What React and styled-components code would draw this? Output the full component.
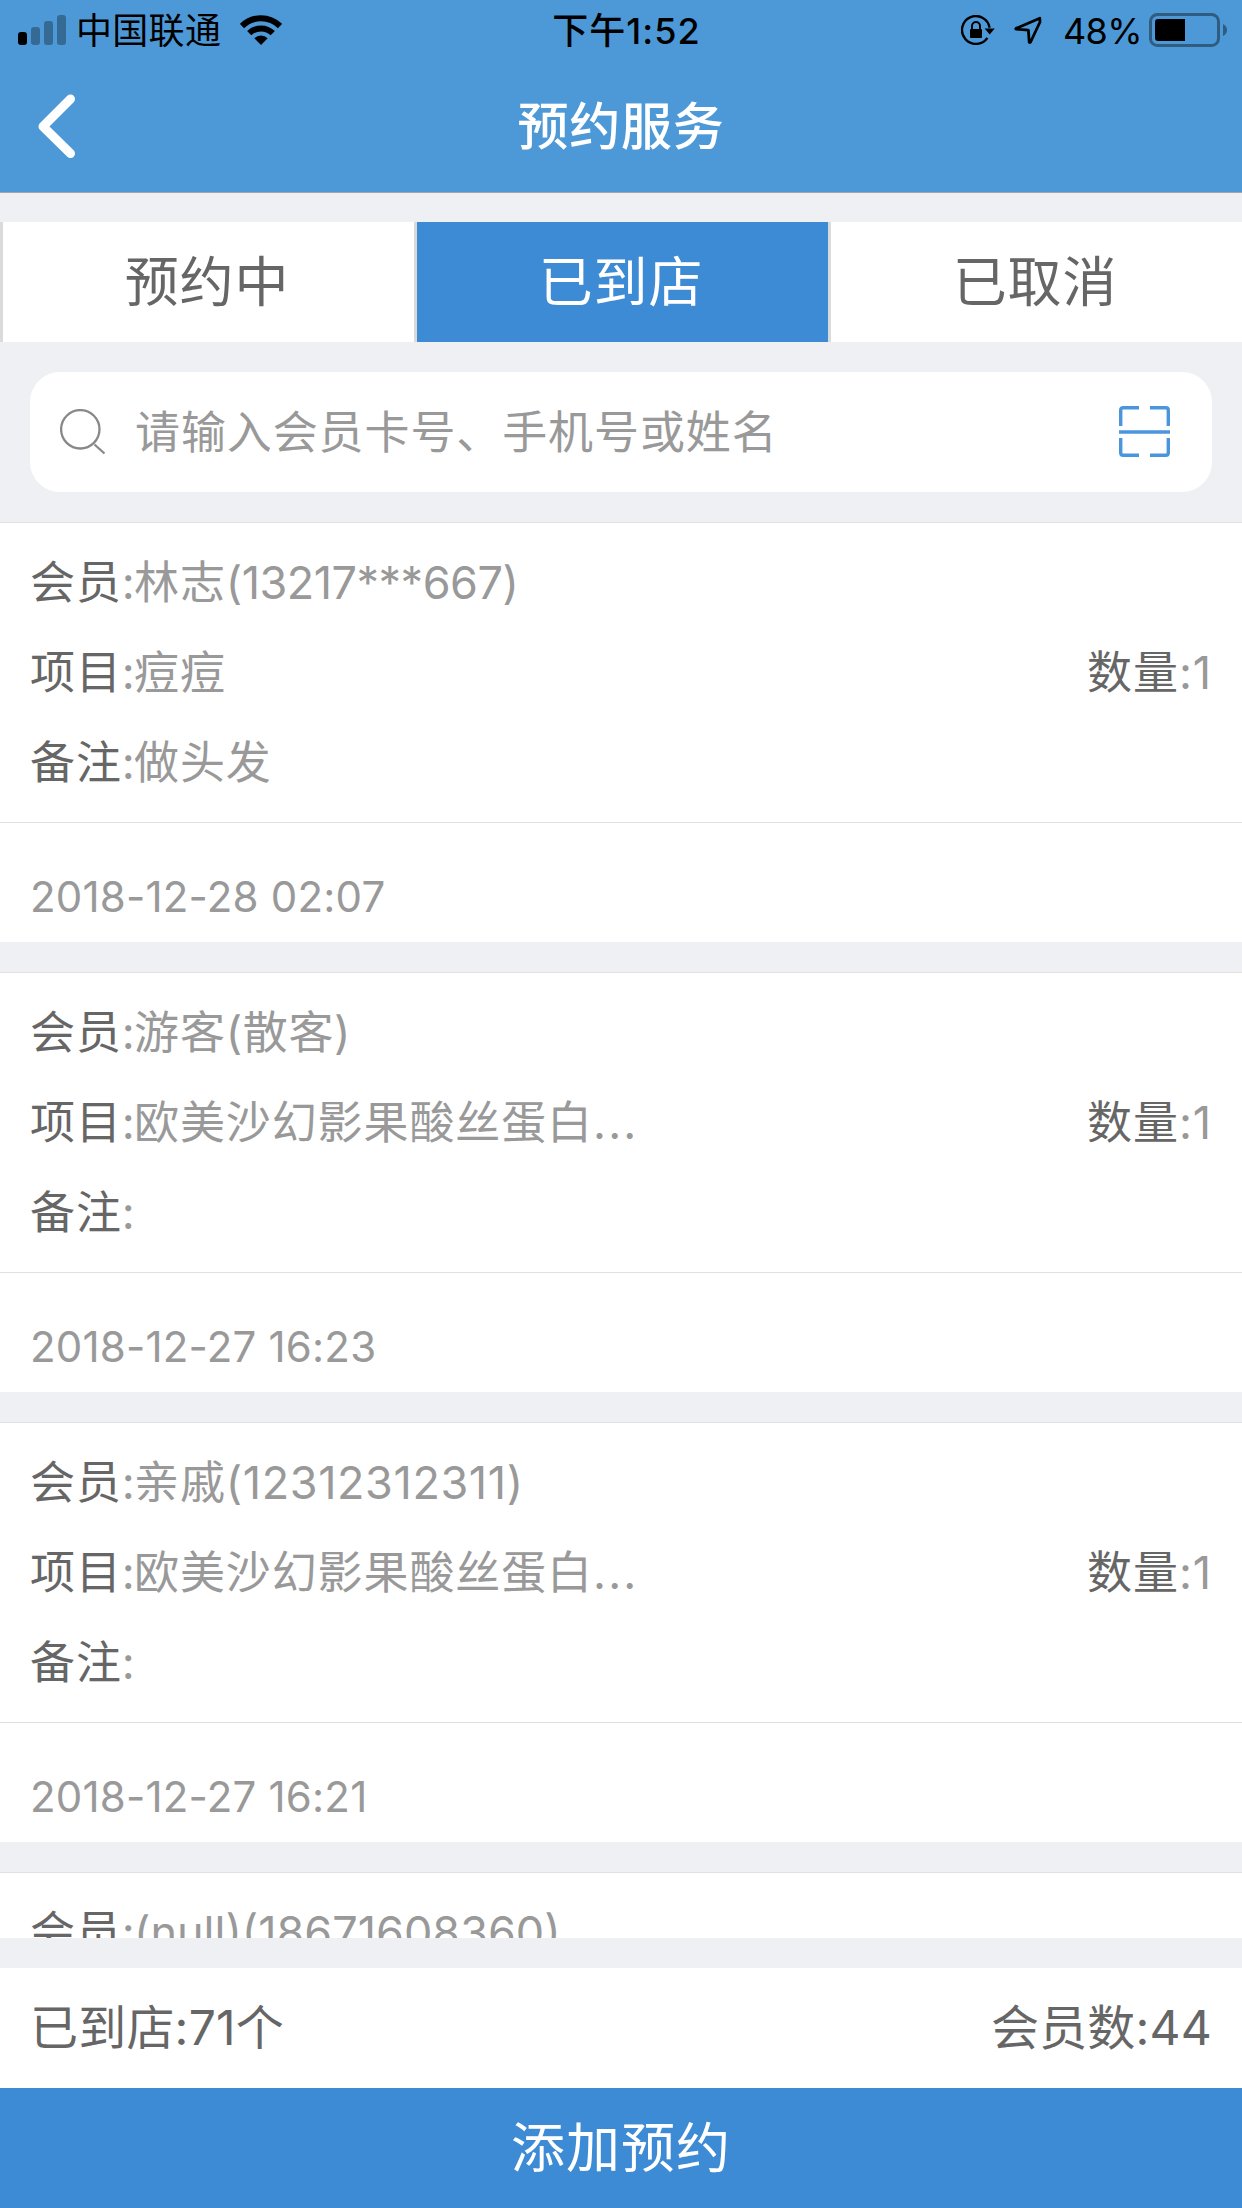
import React, { useState } from 'react';
import styled, { createGlobalStyle } from 'styled-components';

const GlobalStyle = createGlobalStyle`
  * {
    box-sizing: border-box;
  }

  body {
    margin: 0;
    background: #eff0f4;
    font-family: Inter, 'Noto Sans CJK SC', sans-serif;
    -webkit-font-smoothing: antialiased;
  }

  button, input {
    font-family: inherit;
    border: none;
    padding: 0;
    background: none;
  }
`;

const Screen = styled.div`
  width: 1242px;
  height: 2208px;
  display: flex;
  flex-direction: column;
  overflow: hidden;
  background: #eff0f4;
`;

const Header = styled.header`
  flex: none;
  background: #4d99d7;
  border-bottom: 1px solid #a4a6ad;
`;

const StatusBar = styled.div`
  height: 60px;
  display: grid;
  grid-template-columns: 1fr auto 1fr;
  align-items: center;
  padding: 0 15px 0 18px;
  font-size: 36px;
  line-height: 60px;
  color: #000;
`;

const StatusGroup = styled.div`
  display: flex;
  align-items: center;
  justify-content: ${(props) => props.$end ? 'flex-end' : 'flex-start'};

  svg {
    display: block;
    flex: none;
  }
`;

const Carrier = styled.span`
  margin: 0 19px 0 10px;
  padding-top: 2px;
  line-height: 58px;
  letter-spacing: 0.3px;
`;

const Clock = styled.span`
  padding: 2px 0 0 8px;
  line-height: 58px;
  font-weight: 500;
  letter-spacing: 1px;
`;

const BatteryLevel = styled.span`
  margin: 0 7px 0 21px;
  padding-top: 2px;
  line-height: 58px;
  letter-spacing: -0.6px;
`;

const NavBar = styled.div`
  height: 132px;
  display: grid;
  grid-template-columns: 120px 1fr 120px;
  align-items: center;
`;

const BackButton = styled.button`
  height: 132px;
  padding-left: 36px;
  display: flex;
  align-items: center;
  cursor: pointer;
`;

const Title = styled.h1`
  margin: 0;
  padding-top: 2px;
  text-align: center;
  font-size: 51px;
  font-weight: 500;
  line-height: 130px;
  letter-spacing: 0.7px;
  color: #fff;
`;

const Tabs = styled.div`
  flex: none;
  display: flex;
  height: 120px;
  margin-top: 29px;
`;

const Tab = styled.button`
  flex: 1;
  padding-top: 2px;
  font-size: 54px;
  line-height: 118px;
  letter-spacing: 0.8px;
  color: ${(props) => props.$active ? '#fff' : '#666'};
  background: ${(props) => props.$active ? '#3d8bd4' : '#fff'};
  box-shadow: inset 3px 0 0 #dadada;
  cursor: pointer;
`;

const SearchBox = styled.div`
  flex: none;
  height: 120px;
  margin: 30px;
  padding: 0 42px 0 30px;
  display: flex;
  align-items: center;
  background: #fff;
  border-radius: 30px;
`;

const SearchInput = styled.input`
  flex: 1;
  height: 120px;
  margin-left: 30px;
  padding-top: 1px;
  font-size: 45px;
  letter-spacing: 0.9px;
  color: #666;
  outline: none;

  &::placeholder {
    color: #999;
    opacity: 1;
  }
`;

const List = styled.div`
  flex: 1;
  min-height: 0;
  overflow: hidden;
  display: flex;
  flex-direction: column;
  gap: 30px;
`;

const Card = styled.article`
  flex: none;
  background: #fff;
  border-top: 1px solid #e0e0e2;
`;

const CardBody = styled.div`
  padding: 15px 30px 14px;
`;

const Row = styled.div`
  display: flex;
  justify-content: space-between;
  height: 90px;
  line-height: 90px;
  font-size: 45px;
`;

const Field = styled.div`
  letter-spacing: 0.9px;
  white-space: nowrap;
  color: #999;
`;

const Label = styled.span`
  color: #666;
`;

const Latin = styled.span`
  letter-spacing: ${(props) => props.$tracking || 0}px;
`;

const CardFooter = styled.div`
  height: 120px;
  padding: 29px 30px 0;
  border-top: 1px solid #e0e0e2;
  font-size: 42px;
  line-height: 90px;
  letter-spacing: 0.2px;
  color: #999;
`;

const Summary = styled.div`
  flex: none;
  height: 120px;
  margin-top: 30px;
  padding: 0 30px;
  display: flex;
  justify-content: space-between;
  background: #fff;
  font-size: 48px;
  line-height: 120px;
  letter-spacing: 0.2px;
  color: #666;
`;

const AddButton = styled.button`
  flex: none;
  height: 120px;
  padding-top: 2px;
  background: #3d8bd4;
  color: #fff;
  font-size: 54px;
  line-height: 118px;
  letter-spacing: 1px;
  cursor: pointer;
`;

const LockSlot = styled.span`
  margin-right: 19px;
`;

const SignalIcon = () => (
  <svg width="48" height="30" viewBox="0 0 48 30">
    <rect x="0" y="17" width="9" height="13" rx="3" />
    <g opacity="0.3">
      <rect x="13" y="12" width="9" height="18" rx="3" />
      <rect x="26" y="6" width="9" height="24" rx="3" />
      <rect x="39" y="0" width="9" height="30" rx="3" />
    </g>
  </svg>
);

const WifiIcon = () => (
  <svg width="42" height="30" viewBox="0 0 42 30">
    <g fill="none" stroke="#000" strokeWidth="6">
      <path d="M2 11 A27 27 0 0 1 40 11" />
      <path d="M9.2 18.2 A17 17 0 0 1 32.8 18.2" />
    </g>
    <path d="M21 30 L14.3 23.3 A9.6 9.6 0 0 1 27.7 23.3 Z" />
  </svg>
);

const RotationLockIcon = () => (
  <svg width="34" height="30" viewBox="0 0 34 30">
    <path d="M26.4 22.8 A13.9 13.9 0 1 1 28.6 12.8" fill="none" stroke="#000" strokeWidth="2.4" />
    <path d="M23.6 13.6 H33.8 L28.7 19.6 Z" />
    <rect x="9" y="14" width="12" height="9" rx="1" />
    <path d="M11 14.5 V11 A4 4 0 0 1 19 11 V14.5" fill="none" stroke="#000" strokeWidth="2" />
  </svg>
);

const LocationIcon = () => (
  <svg width="28" height="28" viewBox="0 0 28 28">
    <path
      d="M25.8 2.2 L2 12.4 Q1.4 13 2.2 13.2 L14.4 14.2 L15.2 26.2 Q15.8 26.8 16.6 26 L26 6 Z"
      fill="none"
      stroke="#000"
      strokeWidth="2.8"
      strokeLinejoin="round"
    />
  </svg>
);

const BatteryIcon = () => (
  <svg width="78" height="34" viewBox="0 0 78 34">
    <rect x="1.5" y="1.5" width="68" height="31" rx="7" fill="none" stroke="#2f5d82" strokeWidth="3" />
    <path d="M9 6 H36 V28 H9 A3 3 0 0 1 6 25 V9 A3 3 0 0 1 9 6 Z" />
    <path d="M74 11 Q78 13 78 17 Q78 21 74 23 Z" fill="#2f5d82" />
  </svg>
);

const BackIcon = () => (
  <svg width="42" height="66" viewBox="0 0 42 66">
    <path
      d="M34.5 6 L7 33.5 L34.5 60.5"
      fill="none"
      stroke="#fff"
      strokeWidth="9"
      strokeLinecap="round"
      strokeLinejoin="round"
    />
  </svg>
);

const SearchIcon = () => (
  <svg width="45" height="46" viewBox="0 0 45 46" fill="none" stroke="#888" strokeWidth="2.3">
    <circle cx="20.3" cy="20.3" r="19.2" />
    <path d="M34.5 35.5 L44.5 44.5" />
  </svg>
);

const ScanIcon = () => (
  <svg width="51" height="52" viewBox="0 0 51 52" fill="none" stroke="#4a96dc" strokeWidth="3.4">
    <path d="M1.7 20 V4.2 Q1.7 1.7 4.2 1.7 H20" />
    <path d="M31 1.7 H46.8 Q49.3 1.7 49.3 4.2 V20" />
    <path d="M1.7 32 V46.8 Q1.7 49.3 4.2 49.3 H20" />
    <path d="M31 49.3 H46.8 Q49.3 49.3 49.3 46.8 V32" />
    <path d="M0 26 H51" />
  </svg>
);

const tabs = ['预约中', '已到店', '已取消'];

const bookings = [
  { name: '林志', phone: '(13217***667)', tracking: -0.5, item: '痘痘', count: 1, note: '做头发', time: '2018-12-28 02:07' },
  { name: '游客', phone: '(散客)', tracking: 0.6, item: '欧美沙幻影果酸丝蛋白', more: true, count: 1, note: '', time: '2018-12-27 16:23' },
  { name: '亲戚', phone: '(12312312311)', tracking: 0.6, item: '欧美沙幻影果酸丝蛋白', more: true, count: 1, note: '', time: '2018-12-27 16:21' },
  { name: '', phone: '(null)(18671608360)', tracking: 0 },
];

const BookingCard = ({ booking }) => (
  <Card>
    <CardBody>
      <Row>
        <Field>
          <Label>会员</Label><Latin $tracking={-0.8}>:</Latin>{booking.name}
          <Latin $tracking={booking.tracking}>{booking.phone}</Latin>
        </Field>
      </Row>
      {booking.item && (
        <>
          <Row>
            <Field>
              <Label>项目</Label><Latin $tracking={-0.8}>:</Latin>{booking.item}
              {booking.more && <Latin $tracking={2.2}>...</Latin>}
            </Field>
            <Field><Label>数量</Label>:{booking.count}</Field>
          </Row>
          <Row>
            <Field><Label>备注</Label><Latin $tracking={-0.8}>:</Latin>{booking.note}</Field>
          </Row>
        </>
      )}
    </CardBody>
    {booking.time && <CardFooter>{booking.time}</CardFooter>}
  </Card>
);

const App = () => {
  const [activeTab, setActiveTab] = useState(1);
  const [keyword, setKeyword] = useState('');

  return (
    <Screen>
      <GlobalStyle />
      <Header>
        <StatusBar>
          <StatusGroup>
            <SignalIcon />
            <Carrier>中国联通</Carrier>
            <WifiIcon />
          </StatusGroup>
          <Clock>下午1:52</Clock>
          <StatusGroup $end>
            <LockSlot>
              <RotationLockIcon />
            </LockSlot>
            <LocationIcon />
            <BatteryLevel>48%</BatteryLevel>
            <BatteryIcon />
          </StatusGroup>
        </StatusBar>
        <NavBar>
          <BackButton aria-label="返回">
            <BackIcon />
          </BackButton>
          <Title>预约服务</Title>
        </NavBar>
      </Header>

      <Tabs>
        {tabs.map((tab, index) => (
          <Tab key={tab} $active={index === activeTab} onClick={() => setActiveTab(index)}>
            {tab}
          </Tab>
        ))}
      </Tabs>

      <SearchBox>
        <SearchIcon />
        <SearchInput
          type="text"
          placeholder="请输入会员卡号、手机号或姓名"
          value={keyword}
          onChange={(e) => setKeyword(e.target.value)}
        />
        <ScanIcon />
      </SearchBox>

      <List>
        {bookings.map((booking, index) => (
          <BookingCard key={index} booking={booking} />
        ))}
      </List>

      <Summary>
        <span>已到店:71个</span>
        <span>会员数:44</span>
      </Summary>
      <AddButton>添加预约</AddButton>
    </Screen>
  );
};

export default App;
